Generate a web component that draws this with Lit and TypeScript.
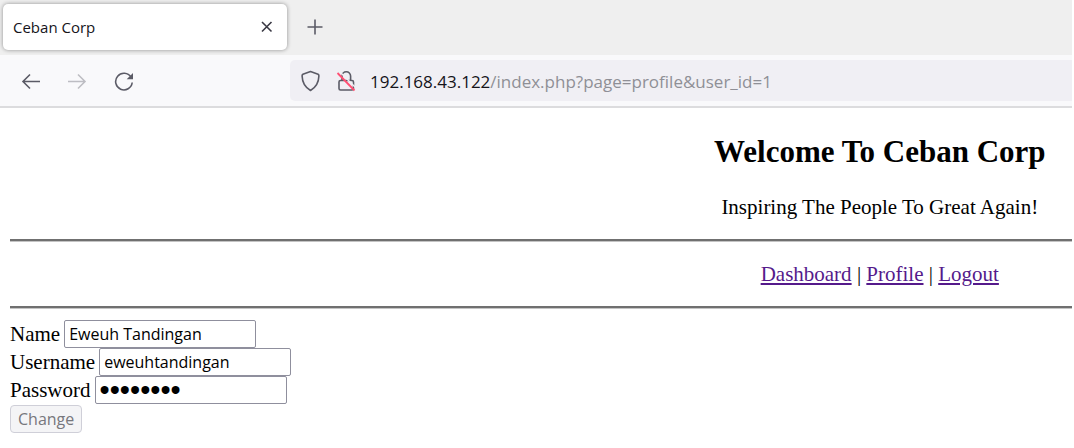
import { LitElement, html, css } from "lit";
import { customElement } from "lit/decorators.js";

@customElement("browser-chrome")
class BrowserChrome extends LitElement {
  static styles = css`
    :host { display: block; font-family: "Open Sans", "Noto Sans", sans-serif; }
    * { box-sizing: border-box; }
    button { border: 0; background: none; padding: 0; display: block; color: #5b5b66; }
    svg { display: block; fill: none; stroke: currentColor; stroke-width: 1.6; }
    .tabs { display: flex; align-items: center; height: 55px; padding: 0 3px 2px; background: #efefef; }
    .tab {
      display: flex; align-items: center; justify-content: space-between;
      width: 284px; height: 46px; padding: 0 10px;
      background: #fff; border-radius: 5px; box-shadow: 0 0 4px rgba(0, 0, 0, 0.4);
      color: #15141a; font-size: 15px; line-height: 20px;
    }
    .tab button { color: #3a3944; }
    .plus { margin-left: 19px; }
    .tools { display: flex; height: 53px; padding-top: 5px; background: #f9f9fb; border-bottom: 2px solid #dcdcde; }
    .nav { display: flex; align-items: center; gap: 26px; width: 290px; height: 41px; padding-left: 21px; }
    .off { color: #bdbdc3; }
    .address {
      flex: 1; display: flex; align-items: center; height: 41px; padding: 0 10px;
      background: #f0eff4; border-radius: 5px 0 0 5px; color: #5b5b66;
    }
    .lock { margin-left: 13px; }
    .url { margin-left: 13px; padding-top: 2px; font-size: 17px; line-height: 24px; color: #8f8f96; white-space: nowrap; }
    .host { color: #15141a; }
  `;
  render() {
    return html`
      <div class="tabs">
        <div class="tab">
          <span>Ceban Corp</span>
          <button aria-label="Close tab"><svg width="20" height="20" viewBox="0 0 20 20"><path d="M5 5l9.500 9.500M14.500 5L5 14.500" /></svg></button>
        </div>
        <button class="plus" aria-label="New tab"><svg width="18" height="18" viewBox="0 0 18 18"><path d="M9 1.500v15M1.500 9h15" /></svg></button>
      </div>
      <div class="tools">
        <div class="nav">
          <button aria-label="Back"><svg width="20" height="20" viewBox="0 0 20 20"><path d="M19 10.500H2M9 3.500L2 10.500l7 7" /></svg></button>
          <button class="off" aria-label="Forward" disabled><svg width="20" height="20" viewBox="0 0 20 20"><path d="M1 10.500h17M11 3.500l7 7-7 7" /></svg></button>
          <button aria-label="Reload"><svg width="20" height="20" viewBox="0 0 20 20"><path d="M18 6.200A8.300 8.300 0 1 0 19.200 11.500" /><path d="M20 2v6.300H13.700z" fill="currentColor" stroke="none" /></svg></button>
        </div>
        <div class="address">
          <svg width="22" height="24" viewBox="0 0 22 24"><path d="M10.500 2.500L18.100 5.200Q19 5.700 18.900 7C18.700 14 16.500 18 10.500 21.500C4.500 18 2.300 14 2.100 7Q2 5.700 2.900 5.200z" stroke-linejoin="round" /></svg>
          <svg class="lock" width="22" height="24" viewBox="0 0 22 24"><rect x="4" y="11.500" width="14.500" height="9.500" rx="1.500" /><path d="M7 11.500V7a4.300 4.300 0 0 1 8.600 0v4.500" /><path d="M5 3L21 19" stroke="#f0eff4" stroke-width="1.500" /><path d="M2.500 4L19.500 21.500" stroke="#ff4f73" stroke-width="1.800" /></svg>
          <span class="url"><span class="host">192.168.43.122</span>/index.php?page=profile&amp;user_id=1</span>
        </div>
      </div>
    `;
  }
}

@customElement("profile-page")
class ProfilePage extends LitElement {
  static styles = css`
    :host { display: block; padding-left: 10px; overflow: hidden; color: #000; font-family: "Liberation Serif", serif; font-size: 21px; line-height: 24px; }
    * { box-sizing: border-box; }
    .banner { width: 163.8%; text-align: center; }
    h2 { margin: 0; padding-top: 26px; font-size: 31px; line-height: 36px; }
    p { margin: 0; padding: 25px 0 20px; }
    nav { padding: 20px 0; }
    hr { margin: 0; border: 0; height: 3px; background: #707070; border-bottom: 1px solid #c4c4c4; }
    a { color: #551a8b; text-decoration: underline; }
    form { padding-top: 11px; }
    .row { display: flex; align-items: center; gap: 4px; height: 28px; }
    input, button { font-family: "Open Sans", "Noto Sans", sans-serif; font-size: 16px; line-height: 20px; height: 28px; border: 1px solid #8f8f9d; }
    input { width: 192px; padding: 0 4px; border-radius: 2px; background: #fff; color: #000; }
    input[type="password"] { font-family: "Liberation Sans", sans-serif; font-size: 29px; }
    button { display: block; margin-top: 1px; padding: 0 7px; border-radius: 4px; background: #f4f4f6; border-color: #cfcfd8; color: #77777d; }
  `;
  render() {
    return html`
      <div class="banner">
        <h2>Welcome To Ceban Corp</h2>
        <p>Inspiring The People To Great Again!</p>
        <hr />
        <nav><a href="#dashboard">Dashboard</a> | <a href="#profile">Profile</a> | <a href="#logout">Logout</a></nav>
        <hr />
      </div>
      <form>
        <div class="row"><label for="name">Name</label><input id="name" value="Eweuh Tandingan" /></div>
        <div class="row"><label for="username">Username</label><input id="username" value="eweuhtandingan" /></div>
        <div class="row"><label for="password">Password</label><input id="password" type="password" value="password" /></div>
        <button type="button" disabled>Change</button>
      </form>
    `;
  }
}

@customElement("app-root")
class AppRoot extends LitElement {
  static styles = css`
    :host { display: block; min-height: 100vh; padding-right: 2px; box-sizing: border-box; background: #fff; }
  `;
  render() {
    return html`<browser-chrome></browser-chrome><profile-page></profile-page>`;
  }
}
